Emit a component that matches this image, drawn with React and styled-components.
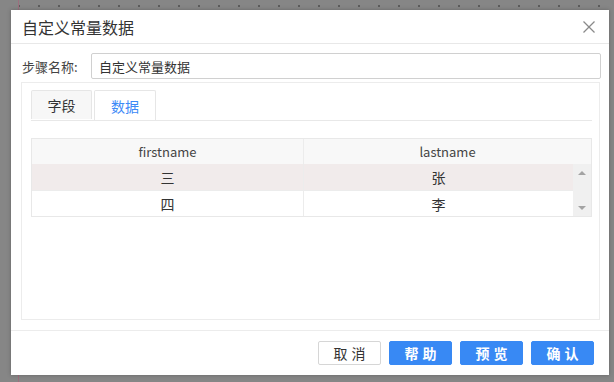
import React from 'react';
import styled, { createGlobalStyle } from 'styled-components';

const GlobalStyle = createGlobalStyle`
  html, body {
    margin: 0;
    padding: 0;
    height: 382px;
    overflow: hidden;
    font-family: "Noto Sans CJK SC", "Noto Sans", sans-serif;
    background-color: #868686;
    background-image:
      linear-gradient(90deg, transparent 18px, #9c6f7e 18px, #9c6f7e 19px, transparent 19px),
      radial-gradient(circle, #5c5c5c 0.8px, transparent 1.2px);
    background-size: 100% 100%, 20px 20px;
    background-position: 0 0, 9px -4px;
    background-repeat: no-repeat, repeat;
  }
`;

const Page = styled.div`
  display: flex;
  padding: 10px 5px 0 11px;
`;

const Dialog = styled.div`
  flex: 1;
  height: 365px;
  background: #fff;
  display: flex;
  flex-direction: column;
  box-shadow: 0 0 4px rgba(0, 0, 0, 0.25);
`;

const TitleBar = styled.div`
  height: 33px;
  border-bottom: 1px solid #e8e8e8;
  display: flex;
  align-items: center;
  justify-content: space-between;
  padding: 0 14px 0 11px;
`;

const Title = styled.div`
  font-size: 16px;
  color: #333;
`;

const Close = styled.svg`
  width: 12px;
  height: 12px;
  stroke: #8a8a8a;
  stroke-width: 1.3;
`;

const Body = styled.div`
  flex: 1;
  display: flex;
  flex-direction: column;
  padding: 9px 8px 10px 11px;
`;

const FieldRow = styled.div`
  display: flex;
  align-items: center;
  height: 26px;
`;

const Label = styled.label`
  width: 69px;
  font-size: 13px;
  color: #444;
`;

const Input = styled.input`
  flex: 1;
  height: 26px;
  box-sizing: border-box;
  border: 1px solid #d0d0d0;
  border-radius: 2px;
  padding: 0 7px;
  font-family: inherit;
  font-size: 13px;
  color: #333;
  outline: none;
`;

const Panel = styled.div`
  flex: 1;
  margin: 3px 1px 0 -1px;
  border: 1px solid #ececec;
  padding: 7px 7px 0 9px;
  display: flex;
  flex-direction: column;
`;

const TabStrip = styled.div`
  display: flex;
  gap: 2px;
  height: 30px;
  border-bottom: 1px solid #e8e8e8;
`;

const Tab = styled.div`
  width: ${p => (p.active ? 62 : 61)}px;
  height: ${p => (p.active ? 30 : 29)}px;
  box-sizing: border-box;
  border: 1px solid #e6e6e6;
  border-bottom: none;
  border-radius: 2px 2px 0 0;
  background: ${p => (p.active ? '#fff' : '#f7f7f7')};
  color: ${p => (p.active ? '#3d8af7' : '#333')};
  font-size: 14px;
  display: flex;
  align-items: center;
  justify-content: center;
`;

const Table = styled.div`
  margin-top: 17px;
  border: 1px solid #e8e8e8;
`;

const HeadRow = styled.div`
  display: grid;
  grid-template-columns: 271px 1fr;
  height: 25px;
  background: #f8f8f8;
`;

const HeadCell = styled.div`
  display: flex;
  align-items: center;
  justify-content: center;
  font-size: 13px;
  color: #444;
  & + & {
    border-left: 1px solid #ececec;
  }
`;

const BodyWrap = styled.div`
  display: flex;
`;

const Rows = styled.div`
  flex: 1;
`;

const Row = styled.div`
  display: grid;
  grid-template-columns: 271px 1fr;
  height: 26px;
  background: ${p => (p.selected ? '#f1ebeb' : '#fff')};
  & + & {
    border-top: 1px solid #ececec;
    height: 25px;
  }
`;

const Cell = styled.div`
  display: flex;
  align-items: center;
  justify-content: center;
  font-size: 14px;
  color: #333;
  & + & {
    border-left: 1px solid #ececec;
  }
`;

const ScrollBar = styled.div`
  width: 18px;
  background: #f0f0f0;
  display: flex;
  flex-direction: column;
  justify-content: space-between;
  align-items: center;
  padding: 7px 0 6px;
`;

const Arrow = styled.div`
  width: 0;
  height: 0;
  border-left: 4px solid transparent;
  border-right: 4px solid transparent;
  ${p => (p.down ? 'border-top: 4px solid #a3a3a3;' : 'border-bottom: 4px solid #a3a3a3;')}
`;

const Footer = styled.div`
  border-top: 1px solid #ececec;
  display: flex;
  justify-content: flex-end;
  gap: 8px;
  padding: 10px 15px 10px 0;
`;

const Button = styled.button`
  width: 63px;
  height: 24px;
  border-radius: 2px;
  font-family: inherit;
  font-size: 14px;
  letter-spacing: 4px;
  text-indent: 4px;
  padding: 0;
  cursor: pointer;
  border: 1px solid ${p => (p.primary ? '#3889f4' : '#d6d6d6')};
  background: ${p => (p.primary ? '#3889f4' : '#fff')};
  color: ${p => (p.primary ? '#fff' : '#333')};
  font-weight: ${p => (p.primary ? 600 : 400)};
`;

const rows = [
  { first: '三', last: '张', selected: true },
  { first: '四', last: '李' },
];

const App = () => (
  <>
    <GlobalStyle />
    <Page>
      <Dialog>
        <TitleBar>
          <Title>自定义常量数据</Title>
          <Close viewBox="0 0 12 12">
            <line x1="0.5" y1="0.5" x2="11.5" y2="11.5" />
            <line x1="11.5" y1="0.5" x2="0.5" y2="11.5" />
          </Close>
        </TitleBar>
        <Body>
          <FieldRow>
            <Label>步骤名称:</Label>
            <Input defaultValue="自定义常量数据" />
          </FieldRow>
          <Panel>
            <TabStrip>
              <Tab>字段</Tab>
              <Tab active>数据</Tab>
            </TabStrip>
            <Table>
              <HeadRow>
                <HeadCell>firstname</HeadCell>
                <HeadCell>lastname</HeadCell>
              </HeadRow>
              <BodyWrap>
                <Rows>
                  {rows.map(r => (
                    <Row key={r.first} selected={r.selected}>
                      <Cell>{r.first}</Cell>
                      <Cell>{r.last}</Cell>
                    </Row>
                  ))}
                </Rows>
                <ScrollBar>
                  <Arrow />
                  <Arrow down />
                </ScrollBar>
              </BodyWrap>
            </Table>
          </Panel>
        </Body>
        <Footer>
          <Button>取消</Button>
          <Button primary>帮助</Button>
          <Button primary>预览</Button>
          <Button primary>确认</Button>
        </Footer>
      </Dialog>
    </Page>
  </>
);

export default App;
